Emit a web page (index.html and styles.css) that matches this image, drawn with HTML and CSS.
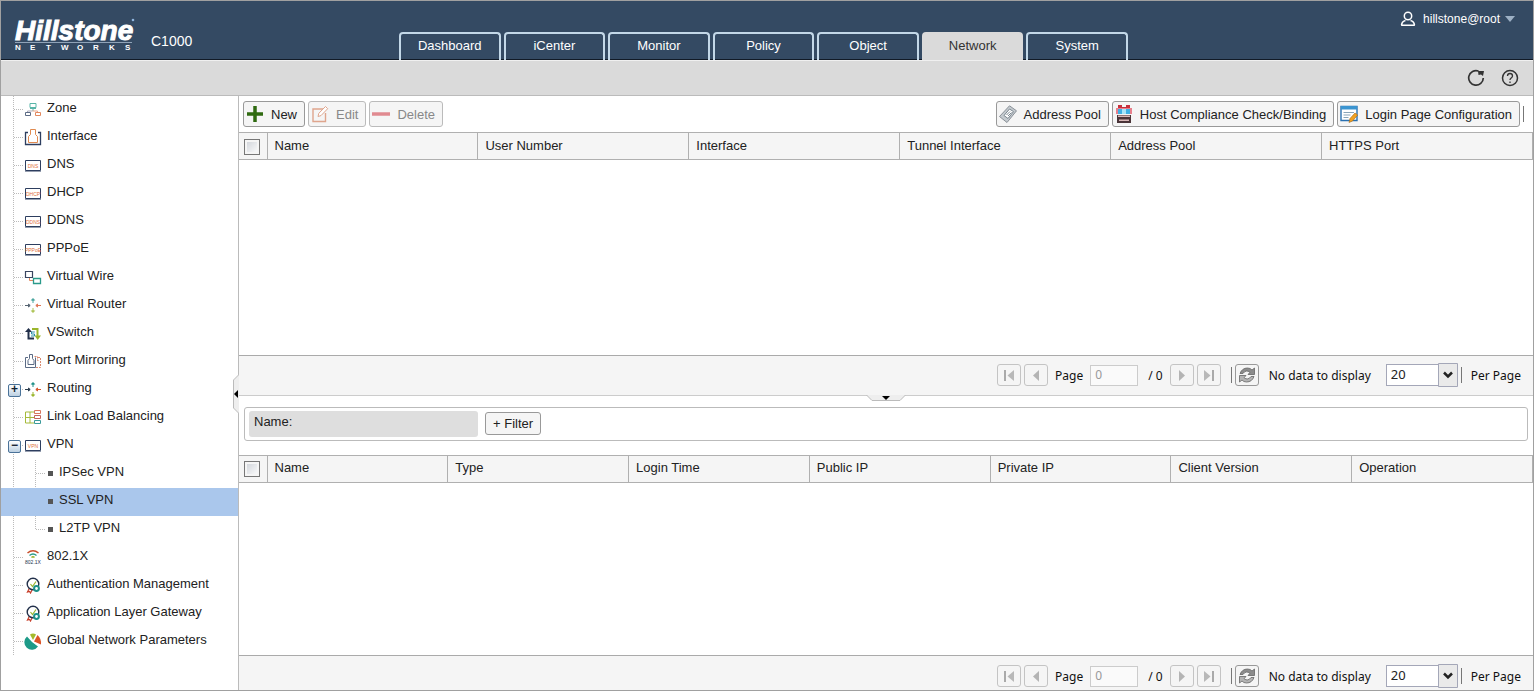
FILE: index.html
```html
<!DOCTYPE html>
<html lang="en">

<head>
  <meta charset="utf-8">
  <title>SSL VPN - C1000</title>
  <link rel="stylesheet" href="styles.css">
</head>

<body>
  <!-- icon sprite -->
  <svg class="sprite" aria-hidden="true">
    <symbol id="i-zone" viewBox="0 0 18 18">
      <g fill="none">
        <path d="M6 3.500h6v4H6zM6 8.500h6M9 8v3" stroke="#58b5a8"/>
        <path d="M3.500 13v-2h5" stroke="#aab"/>
        <path d="M8.500 11h5v2" stroke="#e8a68a"/>
        <path d="M1.500 12.500h5v3h-5z" stroke="#5b6b85"/>
        <path d="M11.500 12.500h5v3h-5z" stroke="#e3895f"/>
      </g>
    </symbol>
    <symbol id="i-interface" viewBox="0 0 18 18">
      <path d="M4 4.500H1.500v12h15v-12H14" fill="none" stroke="#2d3e5f" stroke-width="1.300"/>
      <path d="M6.500 1.500h5v5l2 2v6h-9v-6l2-2z" fill="none" stroke="#e08a50"/>
    </symbol>
    <symbol id="i-box" viewBox="0 0 18 18">
      <path d="M1.500 4.500h15v10h-15z" fill="#fff" stroke="#2d3e5f"/>
      <path d="M1 15.500h16" stroke="#2d3e5f" stroke-opacity=".5"/>
    </symbol>
    <symbol id="i-wire" viewBox="0 0 18 18">
      <path d="M1.500 3.500h7v6h-7z" fill="none" stroke="#3a4560" stroke-width="1.200"/>
      <path d="M5.500 10v2.500H9" fill="none" stroke="#e3895f"/>
      <path d="M9.500 10.500h7v5h-7z" fill="none" stroke="#2a9a8a" stroke-width="1.300"/>
    </symbol>
    <symbol id="i-router" viewBox="0 0 18 18">
      <path d="M9 7V3M7.500 4.200L9 2.500l1.500 1.700z" stroke="#1d9088" fill="#1d9088"/>
      <path d="M9 12v4M7.500 14.800L9 16.500l1.500-1.700z" stroke="#9ab52c" fill="#9ab52c"/>
      <path d="M1 9.500h5M4.500 8l1.700 1.500L4.500 11z" stroke="#2d3e4f" fill="#2d3e4f"/>
      <path d="M12 9.500h5M13.500 8l-1.700 1.500 1.700 1.500z" stroke="#d8562c" fill="#d8562c"/>
    </symbol>
    <symbol id="i-vswitch" viewBox="0 0 18 18">
      <path d="M4.500 6v8.500H10" fill="none" stroke="#22304a" stroke-width="2"/>
      <path d="M1 8l3.500-4L8 8z" fill="#22304a"/>
      <path d="M8 5h5.500v7" fill="none" stroke="#9ab52c" stroke-width="2"/>
      <path d="M10.500 11.500h6.500L13.700 16z" fill="#9ab52c"/>
      <path d="M10.800 8H7.500v2h3v2H7" fill="none" stroke="#2a8fa8"/>
    </symbol>
    <symbol id="i-mirror" viewBox="0 0 18 18">
      <path d="M4 5.500H1.500v10h10v-10" fill="none" stroke="#5b6b85"/>
      <path d="M5.500 2.500h3v4l1.500 2v4H4v-4l1.500-2z" fill="none" stroke="#5b6b85"/>
      <path d="M10.500 4.500h3v4h1M14 5.500h2.500v10H12" fill="none" stroke="#d98a70" stroke-dasharray="2 1"/>
    </symbol>
    <symbol id="i-load" viewBox="0 0 18 18">
      <path d="M10 4H1.500v11H10M1.500 9.500H10M6 4v11" fill="none" stroke="#a5ba3a"/>
      <path d="M10.500 2.500h6v3h-6z" fill="none" stroke="#d8765c"/>
      <path d="M10.500 7.500h6v3h-6z" fill="none" stroke="#c4655c"/>
      <path d="M10.500 12.500h6v3h-6z" fill="none" stroke="#3a9a9a"/>
    </symbol>
    <symbol id="i-wifi" viewBox="0 0 18 18">
      <path d="M3.500 5Q9 0.500 14.500 5" fill="none" stroke="#c8502c" stroke-width="1.500"/>
      <path d="M5.500 7.500Q9 4.500 12.500 7.500" fill="none" stroke="#2a9a8a" stroke-width="1.300"/>
      <path d="M7.500 9.500Q9 8 10.500 9.500" fill="none" stroke="#9ab52c" stroke-width="1.500"/>
    </symbol>
    <symbol id="i-auth" viewBox="0 0 18 18">
      <path d="M5.500 12l-2 4 2-.5 1 1.500 2-4" fill="none" stroke="#c8402c" stroke-width="1.200"/>
      <circle cx="9" cy="8" r="5.800" fill="#fff" stroke="#22304a" stroke-width="1.400"/>
      <path d="M6.500 8l2 2.500L12 5.500" fill="none" stroke="#9ab52c" stroke-width="1.200"/>
      <circle cx="12.500" cy="12.500" r="2.400" fill="#fff" stroke="#1d9088" stroke-width="2"/>
    </symbol>
    <symbol id="i-global" viewBox="0 0 18 18">
      <path d="M8 10L3 4.500a7.500 7.500 0 1 0 11 10z" fill="#1d9a88"/>
      <path d="M9 8L6 2.500q3-2 6 0z" fill="#a5ba2c"/>
      <path d="M10 9.500l3.500-6.500q4 3.500 3.500 9.500z" fill="#dc5428"/>
    </symbol>
    <symbol id="i-plus" viewBox="0 0 18 18">
      <path d="M9 1v16M1 9h16" stroke="#2f6a10" stroke-width="3.500"/>
    </symbol>
    <symbol id="i-edit" viewBox="0 0 18 18">
      <path d="M12 4H2v12.500h12.500V8" fill="none" stroke="#dfa58d" stroke-width="1.400"/>
      <path d="M7 11.500l.8-3.200L14.500 1.500l2.200 2.200L10 10.600z" fill="#fff" stroke="#dfa58d"/>
    </symbol>
    <symbol id="i-minus" viewBox="0 0 18 18">
      <path d="M0 9h18" stroke="#e08a90" stroke-width="3.500"/>
    </symbol>
    <symbol id="i-pool" viewBox="0 0 18 18">
      <path d="M.5 11.500L10.500.800l7 5L8 17.500z" fill="#c4cacf" stroke="#8a9198"/>
      <path d="M5 10.500L10.500 4l4 2.600-5.500 6.900z" fill="#fff" stroke="#7a868f"/>
      <path d="M7.500 10l3.500-3.500M9 11l3.500-3.500" stroke="#7a868f"/>
    </symbol>
    <symbol id="i-host" viewBox="0 0 18 18">
      <path d="M3 0h4v2h4V0h4v3H3z" fill="#c8303c"/>
      <path d="M1 3h16v6H1z" fill="#e8808c"/>
      <path d="M3 4h12v5H3z" fill="#40b0e4"/>
      <path d="M7 4h4v5H7z" fill="#a8e4f8"/>
      <path d="M2 10h14v8H2z" fill="#4a3438"/>
      <path d="M3 10.500h12V12H3zM4 14.500h10V16H4z" fill="#d8b8b8"/>
    </symbol>
    <symbol id="i-login" viewBox="0 0 18 18">
      <path d="M1 1.500h16v14H1z" fill="#fff" stroke="#2a70b0" stroke-width="1.400"/>
      <path d="M1 1h16v3.500H1z" fill="#3a94d0"/>
      <path d="M3.500 7.500H14M3.500 10h7M3.500 12.500h5" stroke="#88a4b8"/>
      <path d="M9 17.500l1-4 5-5.500 2.700 2-5.200 6z" fill="#f0a020" stroke="#a86818" stroke-width=".6"/>
    </symbol>
    <symbol id="i-first" viewBox="0 0 14 14">
      <path d="M3 2v11" stroke="#aaa" stroke-width="2"/>
      <path d="M12 2v11L5.500 7.500z" fill="#b8b8b8"/>
    </symbol>
    <symbol id="i-prev" viewBox="0 0 14 14">
      <path d="M10 2v11L4 7.500z" fill="#b4b4b4"/>
    </symbol>
    <symbol id="i-next" viewBox="0 0 14 14">
      <path d="M4 2v11l6-5.500z" fill="#b4b4b4"/>
    </symbol>
    <symbol id="i-last" viewBox="0 0 14 14">
      <path d="M11 2v11" stroke="#aaa" stroke-width="2"/>
      <path d="M2 2v11l6.500-5.500z" fill="#b8b8b8"/>
    </symbol>
    <symbol id="i-refresh" viewBox="0 0 18 18">
      <path d="M2 7.500Q4 2 9.500 2q3 0 4.500 2L16.500 2v6.500H10l2-2.200q-4-3-7 1.200z" fill="#8c8c8c" stroke="#666" stroke-width=".8"/>
      <path d="M16 10.500Q14 16 8.500 16q-3 0-4.500-2L1.500 16V9.500H8l-2 2.200q4 3 7-1.200z" fill="#b4b4b4" stroke="#666" stroke-width=".8"/>
    </symbol>
  </svg>

  <header class="header">
    <svg class="logo" viewBox="0 0 122 38" role="img" aria-label="Hillstone Networks">
      <text class="logo-name" x="0" y="26">Hillstone</text>
      <path d="M0 28.500h117" stroke="#8fa3b8"/>
      <text class="logo-sub" x="0 15 31 46 62 78 94 110" y="36">NETWORKS</text>
      <circle cx="118" cy="6" r="1.300" fill="#8fb4dc"/>
    </svg>
    <span class="model">C1000</span>
    <nav class="tabs">
      <a href="#">Dashboard</a>
      <a href="#">iCenter</a>
      <a href="#">Monitor</a>
      <a href="#">Policy</a>
      <a href="#">Object</a>
      <a href="#" class="active">Network</a>
      <a href="#">System</a>
    </nav>
    <button class="user" type="button">
      <svg width="16" height="16" viewBox="0 0 16 16" fill="none" stroke="#fff" stroke-width="1.500"><circle cx="8" cy="5" r="3.700"/><path d="M1.500 14.200q.5-4 4-4.700M14.500 14.200q-.5-4-4-4.700M1 14.200h14"/></svg>
      <span>hillstone@root</span>
      <svg width="10" height="6" viewBox="0 0 10 6"><path d="M0 0h10L5 6z" fill="#9db0c4"/></svg>
    </button>
  </header>

  <div class="subbar">
    <button type="button" aria-label="Refresh">
      <svg width="18" height="18" viewBox="0 0 18 18"><path d="M11.500 2A7.300 7.300 0 1 0 16.300 9" fill="none" stroke="#333" stroke-width="1.700"/><path d="M11 2h6l-1 5-2-1.500-2.500.500z" fill="#333"/></svg>
    </button>
    <button type="button" aria-label="Help">
      <svg width="18" height="18" viewBox="0 0 18 18" fill="none" stroke="#333"><circle cx="9" cy="9" r="7.500" stroke-width="1.500"/><path d="M6.500 7q0-2.500 2.500-2.500T11.500 7q0 1-1.300 2T9 11M9 12.500V14" stroke-width="1.300"/></svg>
    </button>
  </div>

  <div class="main">
    <aside class="sidebar">
      <ul class="tree">
        <li><a href="#"><svg class="icon"><use href="#i-zone"/></svg><span>Zone</span></a></li>
        <li><a href="#"><svg class="icon"><use href="#i-interface"/></svg><span>Interface</span></a></li>
        <li><a href="#"><svg class="icon"><use href="#i-box"/><text x="9" y="12">DNS</text></svg><span>DNS</span></a></li>
        <li><a href="#"><svg class="icon"><use href="#i-box"/><text x="9" y="12">DHCP</text></svg><span>DHCP</span></a></li>
        <li><a href="#"><svg class="icon"><use href="#i-box"/><text x="9" y="12">DDNS</text></svg><span>DDNS</span></a></li>
        <li><a href="#"><svg class="icon"><use href="#i-box"/><text x="9" y="12">PPPoE</text></svg><span>PPPoE</span></a></li>
        <li><a href="#"><svg class="icon"><use href="#i-wire"/></svg><span>Virtual Wire</span></a></li>
        <li><a href="#"><svg class="icon faded"><use href="#i-router"/></svg><span>Virtual Router</span></a></li>
        <li><a href="#"><svg class="icon"><use href="#i-vswitch"/></svg><span>VSwitch</span></a></li>
        <li><a href="#"><svg class="icon"><use href="#i-mirror"/></svg><span>Port Mirroring</span></a></li>
        <li class="folder"><a href="#"><svg class="icon"><use href="#i-router"/></svg><span>Routing</span></a></li>
        <li><a href="#"><svg class="icon"><use href="#i-load"/></svg><span>Link Load Balancing</span></a></li>
        <li class="folder open">
          <a href="#"><svg class="icon"><use href="#i-box"/><text x="9" y="12">VPN</text></svg><span>VPN</span></a>
          <ul>
            <li><a href="#"><span>IPSec VPN</span></a></li>
            <li class="selected"><a href="#"><span>SSL VPN</span></a></li>
            <li><a href="#"><span>L2TP VPN</span></a></li>
          </ul>
        </li>
        <li><a href="#"><svg class="icon"><use href="#i-wifi"/><text class="dark" x="9" y="16">802.1X</text></svg><span>802.1X</span></a></li>
        <li><a href="#"><svg class="icon"><use href="#i-auth"/></svg><span>Authentication Management</span></a></li>
        <li><a href="#"><svg class="icon"><use href="#i-auth"/></svg><span>Application Layer Gateway</span></a></li>
        <li><a href="#"><svg class="icon"><use href="#i-global"/></svg><span>Global Network Parameters</span></a></li>
      </ul>
      <button class="collapse-left" type="button" aria-label="Collapse menu">
        <svg width="6" height="40" viewBox="0 0 6 40"><path d="M6 .5L.5 6v28L6 39.500" fill="#eee" stroke="#bbb"/><path d="M5 16v8l-4-4z" fill="#000"/></svg>
      </button>
    </aside>

    <div class="content">
      <section class="pane pane-top">
        <div class="toolbar">
          <button class="btn" type="button"><svg class="icon"><use href="#i-plus"/></svg>New</button>
          <button class="btn" type="button" disabled><svg class="icon"><use href="#i-edit"/></svg>Edit</button>
          <button class="btn" type="button" disabled><svg class="icon"><use href="#i-minus"/></svg>Delete</button>
          <span class="spacer"></span>
          <button class="btn" type="button"><svg class="icon"><use href="#i-pool"/></svg>Address Pool</button>
          <button class="btn" type="button"><svg class="icon"><use href="#i-host"/></svg>Host Compliance Check/Binding</button>
          <button class="btn" type="button"><svg class="icon"><use href="#i-login"/></svg>Login Page Configuration</button>
          <span class="sep"></span>
        </div>
        <table class="grid">
          <tr>
            <th class="check"><input type="checkbox" aria-label="Select all"></th>
            <th>Name</th><th>User Number</th><th>Interface</th><th>Tunnel Interface</th><th>Address Pool</th><th>HTTPS Port</th>
          </tr>
        </table>
        <div class="pager">
          <button type="button" disabled aria-label="First"><svg><use href="#i-first"/></svg></button>
          <button type="button" disabled aria-label="Previous"><svg><use href="#i-prev"/></svg></button>
          <label for="page1">Page</label>
          <input id="page1" type="text" value="0" disabled>
          <span class="total">/ 0</span>
          <button type="button" disabled aria-label="Next"><svg><use href="#i-next"/></svg></button>
          <button type="button" disabled aria-label="Last"><svg><use href="#i-last"/></svg></button>
          <span class="sep"></span>
          <button class="reload" type="button" aria-label="Reload"><svg><use href="#i-refresh"/></svg></button>
          <span class="status">No data to display</span>
          <span class="combo">
            <select id="size1"><option>20</option><option>50</option><option>100</option></select>
            <svg width="20" height="24" viewBox="0 0 20 24"><path d="M.5.500h19v23H.5z" fill="#eaeaea" stroke="#a4a7b8"/><path d="M6 9.500l4 4 4-4" fill="none" stroke="#222" stroke-width="2.500"/></svg>
          </span>
          <span class="sep"></span>
          <label class="per" for="size1">Per Page</label>
        </div>
        <button class="collapse-down" type="button" aria-label="Collapse details">
          <svg width="40" height="6" viewBox="0 0 40 6"><path d="M.5 0L6 5.500h28L39.500 0" fill="#eee" stroke="#bbb"/><path d="M16 1h8l-4 4z" fill="#000"/></svg>
        </button>
      </section>

      <section class="pane pane-bottom">
        <div class="filter">
          <label class="filter-field">Name:<input type="text"></label>
          <button type="button">+ Filter</button>
        </div>
        <table class="grid">
          <tr>
            <th class="check"><input type="checkbox" aria-label="Select all"></th>
            <th>Name</th><th>Type</th><th>Login Time</th><th>Public IP</th><th>Private IP</th><th>Client Version</th><th>Operation</th>
          </tr>
        </table>
        <div class="pager">
          <button type="button" disabled aria-label="First"><svg><use href="#i-first"/></svg></button>
          <button type="button" disabled aria-label="Previous"><svg><use href="#i-prev"/></svg></button>
          <label for="page2">Page</label>
          <input id="page2" type="text" value="0" disabled>
          <span class="total">/ 0</span>
          <button type="button" disabled aria-label="Next"><svg><use href="#i-next"/></svg></button>
          <button type="button" disabled aria-label="Last"><svg><use href="#i-last"/></svg></button>
          <span class="sep"></span>
          <button class="reload" type="button" aria-label="Reload"><svg><use href="#i-refresh"/></svg></button>
          <span class="status">No data to display</span>
          <span class="combo">
            <select id="size2"><option>20</option><option>50</option><option>100</option></select>
            <svg width="20" height="24" viewBox="0 0 20 24"><path d="M.5.500h19v23H.5z" fill="#eaeaea" stroke="#a4a7b8"/><path d="M6 9.500l4 4 4-4" fill="none" stroke="#222" stroke-width="2.500"/></svg>
          </span>
          <span class="sep"></span>
          <label class="per" for="size2">Per Page</label>
        </div>
      </section>
    </div>
  </div>
</body>

</html>
```
FILE: styles.css
```css
* {
  box-sizing: border-box;
}
body {
  display: flex;
  flex-direction: column;
  height: 100vh;
  margin: 0;
  border: 1px solid #a0a0a0;
  overflow: hidden;
  background: #fff;
  color: #222;
  font-family: "Liberation Sans", Arial, sans-serif;
  font-size: 13px;
}
a {
  color: inherit;
  text-decoration: none;
}
button {
  font-family: inherit;
  font-size: 13px;
  color: inherit;
}
.sprite {
  position: absolute;
  width: 0;
  height: 0;
}
.icon {
  flex: none;
  width: 18px;
  height: 18px;
}

/* header */
.header {
  display: flex;
  align-items: flex-end;
  flex: none;
  height: 59px;
  padding-left: 14px;
  border-bottom: 1px solid #111a26;
  background: #344a63;
  color: #fff;
}
.logo {
  width: 122px;
  height: 38px;
  margin-bottom: 7px;
  overflow: visible;
  fill: #fff;
}
.logo-name {
  font-size: 28px;
  font-weight: bold;
  font-style: italic;
  stroke: #fff;
}
.logo-sub {
  font-size: 8px;
  font-weight: bold;
}
.model {
  width: 262px;
  padding: 0 0 10px 14px;
  font-size: 14px;
  line-height: 16px;
}
.tabs {
  display: flex;
  gap: 3px;
  width: 729px;
  margin-bottom: -1px;
}
.tabs a {
  flex: 1;
  height: 28px;
  border: 2px solid #c3d8e8;
  border-bottom: 0;
  border-radius: 4px 4px 0 0;
  line-height: 24px;
  text-align: center;
}
.tabs .active {
  background: #dadada;
  border-color: #dadada;
  color: #333;
}
.user {
  display: flex;
  align-items: center;
  gap: 7px;
  align-self: flex-start;
  margin-left: auto;
  padding: 10px 18px 0 0;
  border: 0;
  background: none;
  font-size: 12px;
}
.user svg:last-child {
  margin-left: -2px;
}
.subbar {
  display: flex;
  flex: none;
  justify-content: flex-end;
  align-items: center;
  gap: 16px;
  height: 36px;
  padding-right: 14px;
  border-top: 1px solid #f0f0f0;
  border-bottom: 1px solid #bbb;
  background: #dadada;
}
.subbar button {
  display: flex;
  padding: 0;
  border: 0;
  background: none;
}

/* left menu */
.main {
  display: flex;
  flex: 1;
  min-height: 0;
}
.sidebar {
  position: relative;
  flex: none;
  width: 238px;
  border-right: 1px solid #bbb;
}
.tree,
.tree ul {
  margin: 0;
  padding: 0;
  list-style: none;
}
.tree {
  background: repeating-linear-gradient(#bbb 0 1px, transparent 1px 2px) 12px 0 / 1px 100% no-repeat;
}
.tree a {
  display: flex;
  align-items: center;
  gap: 5px;
  height: 28px;
  padding: 0 0 2px 23px;
  background: repeating-linear-gradient(90deg, #bbb 0 1px, transparent 1px 2px) 13px 13px / 9px 1px no-repeat;
}
.tree span {
  padding-bottom: 3px;
}
.tree .icon text {
  fill: #e0703c;
  font-size: 5px;
  text-anchor: middle;
}
.tree .icon .dark {
  fill: #22304a;
}
.faded {
  opacity: 0.8;
}
.folder {
  position: relative;
}
.folder::before {
  content: "+";
  position: absolute;
  left: 7px;
  top: 8px;
  width: 11px;
  height: 11px;
  border: 1px solid #4a7298;
  border-radius: 2px;
  background: linear-gradient(#fff, #bcd0e2);
  color: #123;
  font-size: 12px;
  font-weight: bold;
  line-height: 9px;
  text-align: center;
}
.open::before {
  content: "\2212";
}
.tree ul {
  background: repeating-linear-gradient(#bbb 0 1px, transparent 1px 2px) 34px 0 / 1px 70px no-repeat;
}
.tree ul a {
  padding-left: 47px;
  gap: 6px;
  background-position: 35px 13px;
}
.tree ul a::before {
  content: "";
  width: 5px;
  height: 5px;
  background: #555;
}
.tree .selected a {
  background: #aac7ec;
}
.collapse-left,
.collapse-down {
  position: absolute;
  display: flex;
  padding: 0;
  border: 0;
  background: none;
}
.collapse-left {
  right: -1px;
  top: calc(50% - 19px);
}
.collapse-down {
  left: calc(50% - 20px);
  bottom: -5px;
}

/* right side */
.content {
  display: flex;
  flex: 1;
  flex-direction: column;
  min-width: 0;
}
.pane {
  position: relative;
  display: flex;
  flex-direction: column;
  min-height: 0;
}
.pane-top {
  flex: 60 1 0;
}
.pane-bottom {
  flex: 59 1 0;
}
.toolbar {
  display: flex;
  align-items: center;
  gap: 3px;
  height: 36px;
  padding: 0 9px 0 4px;
}
.btn {
  display: flex;
  align-items: center;
  gap: 7px;
  height: 26px;
  padding: 0 7px 0 2px;
  border: 1px solid #999;
  border-radius: 3px;
  background: #f5f5f5;
}
.btn:disabled {
  border-color: #bbb;
  color: #888;
}
.spacer {
  flex: 1;
}
.sep {
  width: 1px;
  height: 16px;
  background: #777;
}
.grid {
  width: 100%;
  table-layout: fixed;
  border-collapse: collapse;
}
.grid th {
  height: 27px;
  padding: 0 7px 2px;
  border: 1px solid #b0b0b0;
  border-left: 0;
  background: #f5f5f5;
  font-weight: normal;
  text-align: left;
}
.grid .check {
  width: 28px;
  padding: 1px 0 0 5px;
}
.check input {
  appearance: none;
  display: block;
  width: 16px;
  height: 16px;
  margin: 0;
  border: 1px solid #777;
  background: linear-gradient(135deg, #ccd0d6, #fff);
  box-shadow: inset 0 0 0 2px #f5f5f5;
}
.pager {
  display: flex;
  flex: none;
  align-items: center;
  justify-content: flex-end;
  height: 41px;
  margin-top: auto;
  padding-right: 12px;
  border-top: 1px solid #aaa;
  border-bottom: 1px solid #ccc;
  background: #f5f5f5;
  color: #111;
  font-family: "Noto Sans", Tahoma, sans-serif;
  font-size: 12px;
}
.pane-bottom .pager {
  height: 35px;
  padding-top: 6px;
  border-bottom: 0;
}
.pager button {
  display: flex;
  align-items: center;
  justify-content: center;
  width: 24px;
  height: 22px;
  margin-right: 3px;
  padding: 0;
  border: 1px solid #c4c4c4;
  border-radius: 3px;
  background: #f5f5f5;
}
.pager button svg {
  width: 14px;
  height: 14px;
}
.pager .reload {
  margin: 0 10px 0 3px;
  border-color: #999;
}
.pager .reload svg {
  width: 18px;
  height: 18px;
}
.pager label {
  margin: 0 7px 0 4px;
}
.pager input {
  width: 48px;
  height: 21px;
  padding: 0 4px 2px;
  border: 1px solid #ccc;
  background: #fafafa;
  color: #999;
  font-family: inherit;
  font-size: 12px;
}
.pager .total {
  margin: 0 7px 0 10px;
}
.pager .sep {
  margin-left: 7px;
}
.combo {
  position: relative;
  display: flex;
  margin-left: 15px;
}
.combo select {
  appearance: none;
  width: 72px;
  height: 22px;
  padding: 0 24px 2px 4px;
  border: 1px solid #a4a7b8;
  border-radius: 0;
  background: #fff;
  color: #222;
  font-family: inherit;
  font-size: 13px;
}
.combo svg {
  position: absolute;
  right: 0;
  top: -1px;
  pointer-events: none;
}
.pager .combo + .sep {
  margin-left: 3px;
}
.pager .per {
  margin: 0 0 0 9px;
}

/* filter row */
.filter {
  display: flex;
  align-items: center;
  gap: 7px;
  height: 34px;
  margin: 11px 5px 14px;
  padding: 0 4px;
  border: 1px solid #bbb;
  border-radius: 3px;
}
.filter-field {
  display: flex;
  width: 229px;
  height: 26px;
  padding: 0 5px;
  border-radius: 3px;
  background: #dedede;
  line-height: 22px;
}
.filter-field input {
  flex: 1;
  min-width: 0;
  border: 0;
  background: none;
}
.filter button {
  height: 23px;
  padding: 0 7px;
  border: 1px solid #999;
  border-radius: 3px;
  background: #f5f5f5;
}
```
